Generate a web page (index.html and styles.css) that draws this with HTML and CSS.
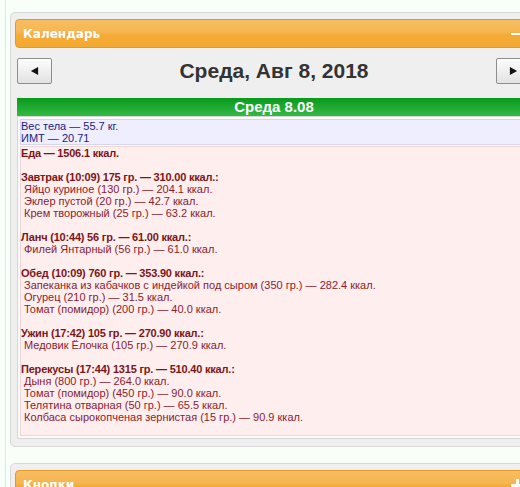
FILE: index.html
```html
<!doctype html>
<html lang="ru">
    <head>
        <meta charset="UTF-8" />
        <meta name="viewport" content="width=device-width, initial-scale=1.0" />
        <title>Календарь</title>
        <link rel="stylesheet" href="styles.css">
    </head>
    <body>
        <div class="page">
            <div class="panel">
                <div class="panel-head">
                    <span class="panel-title">Календарь</span>
                    <span class="toggle minus"></span>
                </div>

                <div class="cal-nav">
                    <button class="nav-btn">
                        <svg viewBox="0 0 10 10"><polygon points="1,5 9,0.5 9,9.5"></polygon></svg>
                    </button>
                    <h1 class="cal-date">Среда, Авг 8, 2018</h1>
                    <button class="nav-btn">
                        <svg viewBox="0 0 10 10"><polygon points="9,5 1,0.5 1,9.5"></polygon></svg>
                    </button>
                </div>

                <div class="day-title">Среда 8.08</div>
                <div class="day">
                    <div class="day-weight">
                        <div>Вес тела — 55.7 кг.</div>
                        <div>ИМТ — 20.71</div>
                        <span class="edit-ico mid"></span>
                    </div>
                    <div class="day-food">
                        <span class="edit-ico top"></span>
                        <span class="edit-ico mid"></span>
                        <div class="food-total">Еда — 1506.1 ккал.</div>

                        <div class="meal">
                            <div class="meal-head">Завтрак (10:09) 175 гр. — 310.00 ккал.:</div>
                            <div class="meal-item">Яйцо куриное (130 гр.) — 204.1 ккал.</div>
                            <div class="meal-item">Эклер пустой (20 гр.) — 42.7 ккал.</div>
                            <div class="meal-item">Крем творожный (25 гр.) — 63.2 ккал.</div>
                        </div>

                        <div class="meal">
                            <div class="meal-head">Ланч (10:44) 56 гр. — 61.00 ккал.:</div>
                            <div class="meal-item">Филей Янтарный (56 гр.) — 61.0 ккал.</div>
                        </div>

                        <div class="meal">
                            <div class="meal-head">Обед (10:09) 760 гр. — 353.90 ккал.:</div>
                            <div class="meal-item">Запеканка из кабачков с индейкой под сыром (350 гр.) — 282.4 ккал.</div>
                            <div class="meal-item">Огурец (210 гр.) — 31.5 ккал.</div>
                            <div class="meal-item">Томат (помидор) (200 гр.) — 40.0 ккал.</div>
                        </div>

                        <div class="meal">
                            <div class="meal-head">Ужин (17:42) 105 гр. — 270.90 ккал.:</div>
                            <div class="meal-item">Медовик Ёлочка (105 гр.) — 270.9 ккал.</div>
                        </div>

                        <div class="meal">
                            <div class="meal-head">Перекусы (17:44) 1315 гр. — 510.40 ккал.:</div>
                            <div class="meal-item">Дыня (800 гр.) — 264.0 ккал.</div>
                            <div class="meal-item">Томат (помидор) (450 гр.) — 90.0 ккал.</div>
                            <div class="meal-item">Телятина отварная (50 гр.) — 65.5 ккал.</div>
                            <div class="meal-item">Колбаса сырокопченая зернистая (15 гр.) — 90.9 ккал.</div>
                        </div>
                    </div>
                </div>
            </div>

            <div class="panel">
                <div class="panel-head">
                    <span class="panel-title">Кнопки</span>
                    <span class="toggle plus"></span>
                </div>
            </div>
        </div>
    </body>
</html>
```

FILE: styles.css
```css
* {
    margin: 0;
    padding: 0;
    box-sizing: border-box;
}

html {
    overflow: hidden;
}

body {
    background: #f8fff8;
    font-family: "Liberation Sans", Arial, sans-serif;
    font-size: 11px;
    line-height: 12px;
}

.page {
    margin-left: 5px;
    padding: 12px 0 40px 4px;
    border-left: 1px solid #d4f0d4;
    width: 540px;
}

.panel {
    width: 528px;
    background: #efefef;
    border: 1px solid #d8d8d8;
    border-radius: 5px;
    padding: 6px 4px 7px;
    margin-bottom: 16px;
}

.panel-head {
    height: 29px;
    display: flex;
    align-items: center;
    justify-content: space-between;
    padding: 0 9px 0 7px;
    border: 1px solid #e5982a;
    border-radius: 4px;
    background: linear-gradient(#f8bd62 0%, #f6b550 45%, #f4ab36 55%, #f4a930 100%);
}

.panel-title {
    font-family: "DejaVu Sans", sans-serif;
    font-weight: bold;
    font-size: 12px;
    color: #fff;
}

.toggle {
    position: relative;
    width: 12px;
    height: 12px;
}

.toggle::before,
.toggle::after {
    content: "";
    position: absolute;
    background: #fff;
}

.toggle::before {
    left: 0;
    right: 0;
    top: 5px;
    height: 2px;
}

.plus::before {
    height: 3px;
}

.plus::after {
    top: 0;
    bottom: 0;
    left: 5px;
    width: 3px;
}

.cal-nav {
    display: flex;
    align-items: center;
    justify-content: space-between;
    margin: 10px 2px 0;
}

.nav-btn {
    width: 35px;
    height: 26px;
    border: 1px solid #8e8e8e;
    border-radius: 2px;
    background: linear-gradient(#fdfdfd, #e2e2e2);
    display: flex;
    align-items: center;
    justify-content: center;
}

.nav-btn svg {
    width: 9px;
    height: 10px;
    fill: #111;
}

.cal-date {
    font-size: 21px;
    line-height: 26px;
    font-weight: bold;
    color: #333;
}

.day-title {
    margin: 14px 2px 0;
    height: 18px;
    line-height: 18px;
    text-align: center;
    font-size: 15px;
    font-weight: bold;
    color: #fff;
    background: linear-gradient(#079a1c, #35b945);
}

.day {
    margin: 0 2px;
    padding: 2px;
    background: #fafafa;
    border: 1px solid #d6d6d6;
}

.day-weight,
.day-food {
    position: relative;
}

.day-weight {
    background: #eeeeff;
    border: 1px solid #d6d6e8;
    color: #1c1c80;
}

.day-food {
    margin-top: 1px;
    padding-bottom: 12px;
    background: #ffeeee;
    border: 1px solid #ecd6d6;
    color: #8a1c2e;
}

.food-total,
.meal-head {
    font-weight: bold;
    letter-spacing: -0.2px;
    color: #7c1518;
}

.meal {
    margin-top: 12px;
}

.meal-item {
    padding-left: 3px;
}

.edit-ico {
    position: absolute;
    right: -6px;
    width: 9px;
    height: 8px;
    border: 2px solid #e2c4cc;
    border-left-width: 3px;
}

.day-weight .edit-ico {
    border-color: #c8c8e0;
}

.edit-ico.top {
    top: 3px;
}

.edit-ico.mid {
    top: 50%;
    margin-top: -4px;
}
```
